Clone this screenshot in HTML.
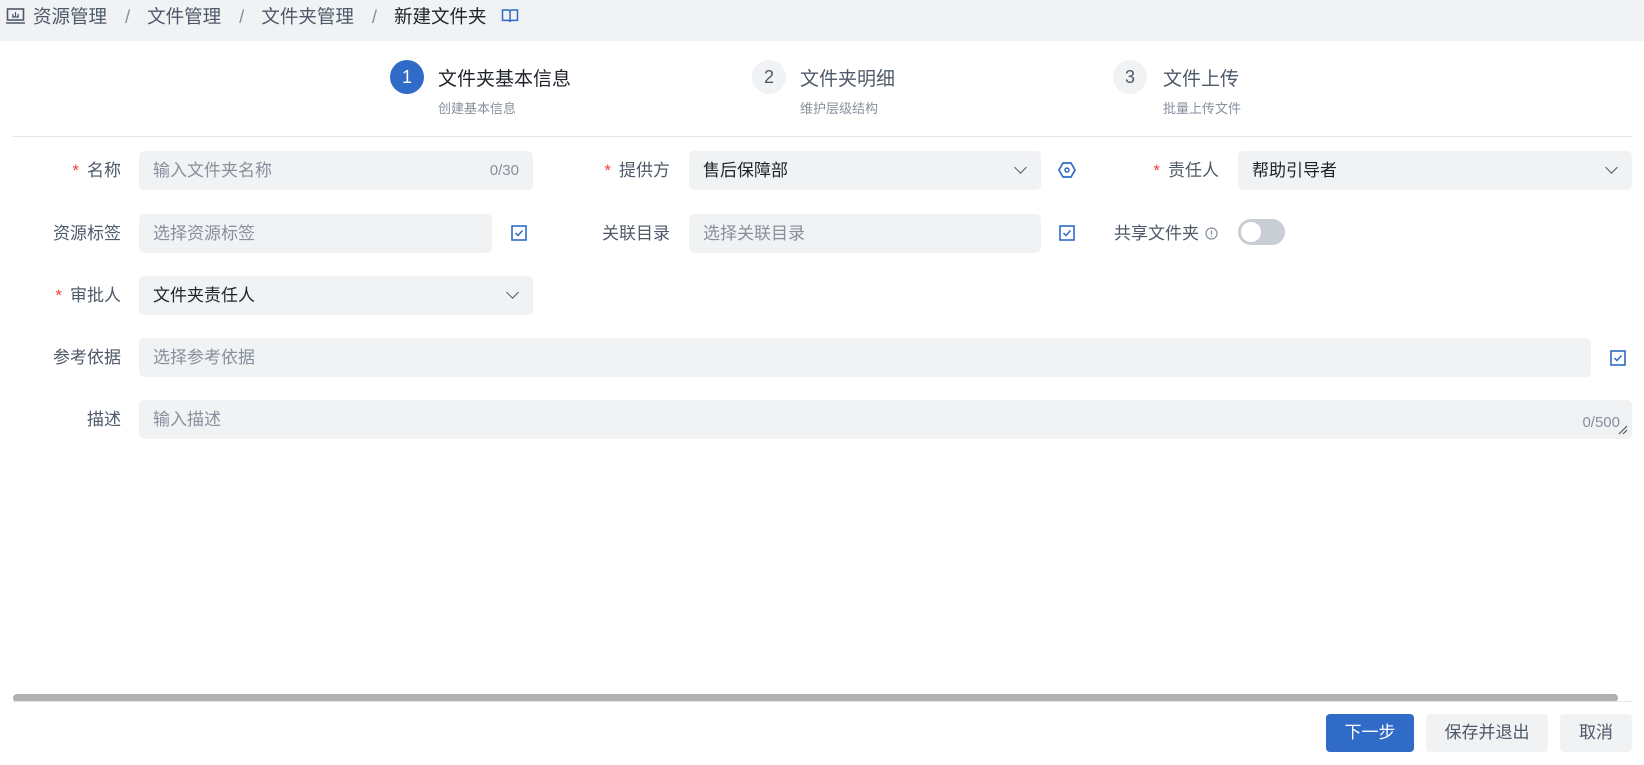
<!DOCTYPE html>
<html><head><meta charset="utf-8"><style>
*{box-sizing:border-box;margin:0;padding:0}
body{width:1644px;height:765px;background:#fff;font-family:"Liberation Sans","Noto Sans CJK SC",sans-serif;position:relative;overflow:hidden;color:#1f2329}
.a{position:absolute}
.hdr{left:0;top:0;width:1644px;height:41px;background:#f1f2f4}
.bc{top:0;height:41px;line-height:33px;font-size:18.5px;color:#4e5969}
.bc b{font-weight:normal;margin:0 17px 0 18px;color:#86909c}
.step .c{position:absolute;width:34px;height:34px;border-radius:50%;background:#f1f2f4;color:#4e5969;font-size:18px;text-align:center;line-height:34px}
.t{font-size:19px;color:#4e5969;white-space:nowrap}
.s{font-size:13px;color:#86909c;white-space:nowrap}
.lbl{font-size:17px;color:#4e5969;text-align:right;white-space:nowrap;height:39px;line-height:39px}
.lbl i{color:#f53f3f;font-style:normal;margin-right:8px}
.in{height:39px;background:#f1f2f4;border-radius:5px;font-size:17px;line-height:39px;padding-left:14px;color:#86909c;white-space:nowrap}
.in.v{color:#1f2329}
.cnt{position:absolute;right:14px;top:0;font-size:15px;color:#86909c}
.chev{position:absolute;right:16px;top:12px;width:9px;height:9px;border-right:1.5px solid #4e5969;border-bottom:1.5px solid #4e5969;transform:rotate(45deg)}
.cb{width:16px;height:16px}
.btn{height:38px;border-radius:4px;font-size:17px;text-align:center;line-height:38px;background:#f1f2f4;color:#4e5969}
</style></head><body>
<div class="a hdr"></div>
<svg class="a" style="left:6px;top:7px" width="19" height="19" viewBox="0 0 19 19"><rect x="1.5" y="2" width="16" height="11" fill="none" stroke="#4e5969" stroke-width="1.6"/><path d="M0 16h19" stroke="#4e5969" stroke-width="1.6"/><path d="M6 10h7M9.5 5v5M6.5 7l1 3M12.5 7l-1 3" stroke="#4e5969" stroke-width="1.2"/></svg>
<div class="a bc" style="left:33px">资源管理<b>/</b>文件管理<b>/</b>文件夹管理<b>/</b><span style="color:#1f2329">新建文件夹</span></div>
<svg class="a" style="left:501px;top:8px" width="18" height="16" viewBox="0 0 18 16"><path d="M1.5 2h5.5c1.2 0 2 .8 2 2v10c0-1-.8-1.6-2-1.6H1.5zM16.5 2H11c-1.2 0-2 .8-2 2v10c0-1 .8-1.6 2-1.6h5.5z" fill="none" stroke="#2f6bc7" stroke-width="1.5"/></svg>

<div class="step"><div class="c" style="left:390px;top:60px;background:#2f6bc7;color:#fff">1</div></div>
<div class="a t" style="left:438px;top:64px;color:#1f2329">文件夹基本信息</div>
<div class="a s" style="left:438px;top:98px">创建基本信息</div>
<div class="step"><div class="c" style="left:752px;top:60px">2</div></div>
<div class="a t" style="left:800px;top:64px">文件夹明细</div>
<div class="a s" style="left:800px;top:98px">维护层级结构</div>
<div class="step"><div class="c" style="left:1113px;top:60px">3</div></div>
<div class="a t" style="left:1163px;top:64px">文件上传</div>
<div class="a s" style="left:1163px;top:98px">批量上传文件</div>
<div class="a" style="left:13px;top:136px;width:1619px;height:1px;background:#e5e6eb"></div>

<!-- row1 -->
<div class="a lbl" style="right:1523px;top:151px"><i>*</i>名称</div>
<div class="a in" style="left:139px;top:151px;width:394px">输入文件夹名称<span class="cnt">0/30</span></div>
<div class="a lbl" style="right:974px;top:151px"><i>*</i>提供方</div>
<div class="a in v" style="left:689px;top:151px;width:352px">售后保障部<span class="chev"></span></div>
<svg class="a" style="left:1058px;top:161px" width="18" height="18" viewBox="0 0 18 18"><path d="M5 2h8l4 7-4 7H5L1 9z" fill="none" stroke="#2f6bc7" stroke-width="1.7"/><circle cx="9" cy="9" r="2" fill="none" stroke="#2f6bc7" stroke-width="1.5"/></svg>
<div class="a lbl" style="right:425px;top:151px"><i>*</i>责任人</div>
<div class="a in v" style="left:1238px;top:151px;width:394px">帮助引导者<span class="chev"></span></div>

<!-- row2 -->
<div class="a lbl" style="right:1523px;top:214px">资源标签</div>
<div class="a in" style="left:139px;top:214px;width:353px">选择资源标签</div>
<svg class="a cb" style="left:511px;top:225px" viewBox="0 0 16 16"><rect x="1" y="1" width="14" height="14" fill="none" stroke="#2f6bc7" stroke-width="1.6"/><path d="M4.5 8l2.5 2.5 4.5-5" fill="none" stroke="#2f6bc7" stroke-width="1.5"/></svg>
<div class="a lbl" style="right:974px;top:214px">关联目录</div>
<div class="a in" style="left:689px;top:214px;width:352px">选择关联目录</div>
<svg class="a cb" style="left:1059px;top:225px" viewBox="0 0 16 16"><rect x="1" y="1" width="14" height="14" fill="none" stroke="#2f6bc7" stroke-width="1.6"/><path d="M4.5 8l2.5 2.5 4.5-5" fill="none" stroke="#2f6bc7" stroke-width="1.5"/></svg>
<div class="a lbl" style="right:445px;top:214px">共享文件夹</div>
<svg class="a" style="left:1205px;top:227px" width="13" height="13" viewBox="0 0 13 13"><circle cx="6.5" cy="6.5" r="5.5" fill="none" stroke="#86909c" stroke-width="1.2"/><path d="M6.5 3.5v4M6.5 8.8v1" stroke="#86909c" stroke-width="1.3"/></svg>
<div class="a" style="left:1238px;top:219px;width:47px;height:26px;border-radius:13px;background:#c9cdd4"></div>
<div class="a" style="left:1241px;top:222px;width:20px;height:20px;border-radius:50%;background:#fff"></div>

<!-- row3 -->
<div class="a lbl" style="right:1523px;top:276px"><i>*</i>审批人</div>
<div class="a in v" style="left:139px;top:276px;width:394px">文件夹责任人<span class="chev"></span></div>

<!-- row4 -->
<div class="a lbl" style="right:1523px;top:338px">参考依据</div>
<div class="a in" style="left:139px;top:338px;width:1452px">选择参考依据</div>
<svg class="a cb" style="left:1610px;top:350px" viewBox="0 0 16 16"><rect x="1" y="1" width="14" height="14" fill="none" stroke="#2f6bc7" stroke-width="1.6"/><path d="M4.5 8l2.5 2.5 4.5-5" fill="none" stroke="#2f6bc7" stroke-width="1.5"/></svg>

<!-- row5 -->
<div class="a lbl" style="right:1523px;top:400px">描述</div>
<div class="a in" style="left:139px;top:400px;width:1493px">输入描述<span class="cnt" style="top:3px;right:12px;font-size:15px">0/500</span></div>
<svg class="a" style="left:1618px;top:425px" width="10" height="10" viewBox="0 0 10 10"><path d="M1 9L9 1M5 9L9 5" stroke="#555" stroke-width="1.2"/></svg>

<div class="a" style="left:13px;top:694px;width:1605px;height:8px;border-radius:4px;background:#b0b0b0"></div>
<div class="a" style="left:13px;top:701px;width:1619px;height:1px;background:#e5e6eb"></div>

<div class="a btn" style="left:1326px;top:714px;width:88px;background:#2f6bc7;color:#fff">下一步</div>
<div class="a btn" style="left:1426px;top:714px;width:122px">保存并退出</div>
<div class="a btn" style="left:1560px;top:714px;width:72px">取消</div>
</body></html>
